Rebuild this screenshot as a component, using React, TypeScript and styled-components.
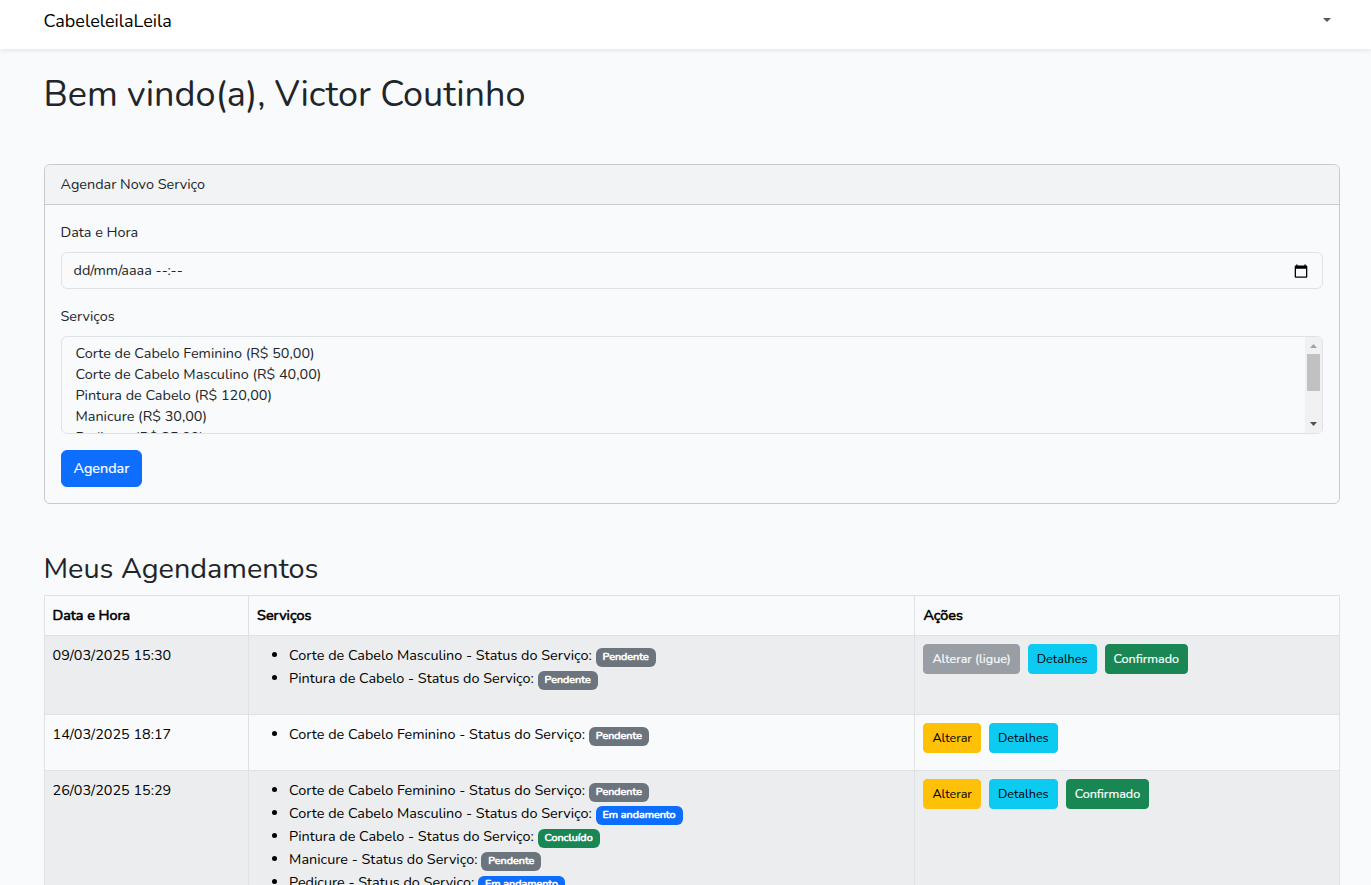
import React from "react";
import styled, { createGlobalStyle } from "styled-components";

const GlobalStyle = createGlobalStyle`
  *, *::before, *::after { box-sizing: border-box; }
  body {
    margin: 0;
    height: 885px;
    overflow: hidden;
    background: #f8fafc;
    color: #212529;
    font-family: Nunito, Lato, sans-serif;
    font-size: 14.4px;
    font-weight: 400;
    line-height: 1.6;
  }
`;

const Navbar = styled.nav`
  display: flex;
  align-items: flex-start;
  justify-content: space-between;
  height: 49px;
  padding: 7px 40px 0 43.5px;
  background: #fff;
  box-shadow: 0 2px 4px rgba(0, 0, 0, 0.075);
`;

const Brand = styled.a`
  color: #000;
  font-size: 18px;
`;

const Caret = styled.span`
  margin-top: 11px;
  border-top: 4.32px solid #595959;
  border-right: 4.32px solid transparent;
  border-left: 4.32px solid transparent;
`;

const Main = styled.main`
  width: 1339.5px;
  padding: 24px 0 0 43.5px;
`;

const Title = styled.h1`
  margin: 0 0 48px;
  font-size: 36px;
  font-weight: 400;
  line-height: 1.2;
`;

const Subtitle = styled.h2`
  margin: 48px 0 8px;
  font-size: 28.8px;
  font-weight: 400;
  line-height: 1.2;
`;

const Card = styled.section`
  border: 1px solid #c8cacc;
  border-radius: 6px;
  overflow: hidden;
`;

const CardHeader = styled.header`
  padding: 8px 16px;
  border-bottom: 1px solid #c8cacc;
  background: #f1f3f5;
`;

const CardBody = styled.div`
  padding: 16px;
`;

const Field = styled.div`
  margin-bottom: 16px;
`;

const Label = styled.div`
  margin-bottom: 8px;
`;

const DateInput = styled.div`
  display: flex;
  align-items: center;
  justify-content: space-between;
  height: 37px;
  padding: 6px 14px 6px 12px;
  border: 1px solid #dee2e6;
  border-radius: 6px;
`;

const ServiceList = styled.div`
  display: flex;
  justify-content: space-between;
  height: 98px;
  border: 1px solid #dee2e6;
  border-radius: 6px;
  overflow: hidden;
`;

const Options = styled.div`
  padding: 6px 14px;
`;

const Option = styled.div`
  height: 21px;
  line-height: 21px;
  white-space: nowrap;
`;

const Scrollbar = styled.div`
  display: flex;
  flex-direction: column;
  align-items: center;
  width: 17px;
  background: #f1f1f1;
`;

const ScrollArrow = styled.svg`
  display: block;
  width: 17px;
  height: 17px;
  flex: none;
`;

const ScrollThumb = styled.div`
  width: 13px;
  height: 37px;
  margin-bottom: auto;
  background: #c1c1c1;
`;

type Tone = "primary" | "secondary" | "success" | "info" | "warning";

const tones: Record<Tone, { bg: string; fg: string }> = {
  primary: { bg: "#0d6efd", fg: "#fff" },
  secondary: { bg: "#6c757d", fg: "#fff" },
  success: { bg: "#198754", fg: "#fff" },
  info: { bg: "#0dcaf0", fg: "#000" },
  warning: { bg: "#ffc107", fg: "#000" },
};

const Button = styled.button<{ $tone: Tone; $small?: boolean }>`
  display: block;
  padding: ${(p) => (p.$small ? "4px 8px" : "6px 12px")};
  border: 1px solid ${(p) => tones[p.$tone].bg};
  border-radius: ${(p) => (p.$small ? "4px" : "6px")};
  background: ${(p) => tones[p.$tone].bg};
  color: ${(p) => tones[p.$tone].fg};
  font-family: inherit;
  font-size: ${(p) => (p.$small ? "12.6px" : "14.4px")};
  line-height: 1.6;
  white-space: nowrap;
  -webkit-text-stroke: ${(p) => (tones[p.$tone].fg === "#fff" ? "0.2px" : "0")};
  &:disabled { opacity: 0.65; }
`;

const Table = styled.table`
  width: 1296px;
  table-layout: fixed;
  border-collapse: collapse;
  color: #000;
`;

const HeadCell = styled.th<{ $width: number }>`
  width: ${(p) => p.$width}px;
  padding: 8px;
  border: 1px solid #dee2e6;
  text-align: left;
  font-weight: 400;
  -webkit-text-stroke: 0.6px #000;
`;

const BodyRow = styled.tr`
  &:nth-child(odd) { background: #ebedef; }
`;

const Cell = styled.td`
  padding: 8px;
  border: 1px solid #dee2e6;
  vertical-align: top;
`;

const Services = styled.ul`
  margin: 0 0 16px;
  padding-left: 32px;
`;

const Badge = styled.span<{ $tone: Tone }>`
  display: inline-block;
  padding: 0.35em 0.65em;
  border-radius: 6px;
  background: ${(p) => tones[p.$tone].bg};
  color: #fff;
  font-size: 10.8px;
  line-height: 1;
  -webkit-text-stroke: 0.6px #fff;
`;

const Actions = styled.div`
  display: flex;
  gap: 8px;
`;

const CalendarIcon = () => (
  <svg width="14" height="14" viewBox="0 0 14 14">
    <path
      fillRule="evenodd"
      d="M2.2 0.4h1.4v1.2h6.8v-1.2h1.4v1.2h0.5a1 1 0 0 1 1 1v10.2a1 1 0 0 1-1 1H1.7a1 1 0 0 1-1-1V2.6a1 1 0 0 1 1-1h0.5zM2 4.7v7.9h10V4.7z"
    />
  </svg>
);

const options = [
  "Corte de Cabelo Feminino (R$ 50,00)",
  "Corte de Cabelo Masculino (R$ 40,00)",
  "Pintura de Cabelo (R$ 120,00)",
  "Manicure (R$ 30,00)",
  "Pedicure (R$ 35,00)",
];

const statusTone: Record<string, Tone> = {
  Pendente: "secondary",
  "Em andamento": "primary",
  Concluído: "success",
};

interface Appointment {
  date: string;
  services: [string, string][];
  locked?: boolean;
  confirmed?: boolean;
}

const appointments: Appointment[] = [
  {
    date: "09/03/2025 15:30",
    services: [
      ["Corte de Cabelo Masculino", "Pendente"],
      ["Pintura de Cabelo", "Pendente"],
    ],
    locked: true,
    confirmed: true,
  },
  {
    date: "14/03/2025 18:17",
    services: [["Corte de Cabelo Feminino", "Pendente"]],
  },
  {
    date: "26/03/2025 15:29",
    services: [
      ["Corte de Cabelo Feminino", "Pendente"],
      ["Corte de Cabelo Masculino", "Em andamento"],
      ["Pintura de Cabelo", "Concluído"],
      ["Manicure", "Pendente"],
      ["Pedicure", "Em andamento"],
    ],
    confirmed: true,
  },
];

export default function App() {
  return (
    <>
      <GlobalStyle />
      <Navbar>
        <Brand>CabeleleilaLeila</Brand>
        <Caret />
      </Navbar>
      <Main>
        <Title>Bem vindo(a), Victor Coutinho</Title>
        <Card>
          <CardHeader>Agendar Novo Serviço</CardHeader>
          <CardBody>
            <Field>
              <Label>Data e Hora</Label>
              <DateInput>
                <span>dd/mm/aaaa --:--</span>
                <CalendarIcon />
              </DateInput>
            </Field>
            <Field>
              <Label>Serviços</Label>
              <ServiceList>
                <Options>
                  {options.map((o) => (
                    <Option key={o}>{o}</Option>
                  ))}
                </Options>
                <Scrollbar>
                  <ScrollArrow viewBox="0 0 17 17">
                    <path d="M5 11h7L8.5 7z" fill="#a3a3a3" />
                  </ScrollArrow>
                  <ScrollThumb />
                  <ScrollArrow viewBox="0 0 17 17">
                    <path d="M5 6h7L8.5 10z" fill="#505050" />
                  </ScrollArrow>
                </Scrollbar>
              </ServiceList>
            </Field>
            <Button $tone="primary">Agendar</Button>
          </CardBody>
        </Card>
        <Subtitle>Meus Agendamentos</Subtitle>
        <Table>
          <thead>
            <tr>
              <HeadCell $width={204.6}>Data e Hora</HeadCell>
              <HeadCell $width={666.3}>Serviços</HeadCell>
              <HeadCell $width={424.1}>Ações</HeadCell>
            </tr>
          </thead>
          <tbody>
            {appointments.map((a) => (
              <BodyRow key={a.date}>
                <Cell>{a.date}</Cell>
                <Cell>
                  <Services>
                    {a.services.map(([name, status]) => (
                      <li key={name}>
                        {name} - Status do Serviço:{" "}
                        <Badge $tone={statusTone[status]}>{status}</Badge>
                      </li>
                    ))}
                  </Services>
                </Cell>
                <Cell>
                  <Actions>
                    {a.locked ? (
                      <Button $tone="secondary" $small disabled>Alterar (ligue)</Button>
                    ) : (
                      <Button $tone="warning" $small>Alterar</Button>
                    )}
                    <Button $tone="info" $small>Detalhes</Button>
                    {a.confirmed && <Button $tone="success" $small>Confirmado</Button>}
                  </Actions>
                </Cell>
              </BodyRow>
            ))}
          </tbody>
        </Table>
      </Main>
    </>
  );
}
